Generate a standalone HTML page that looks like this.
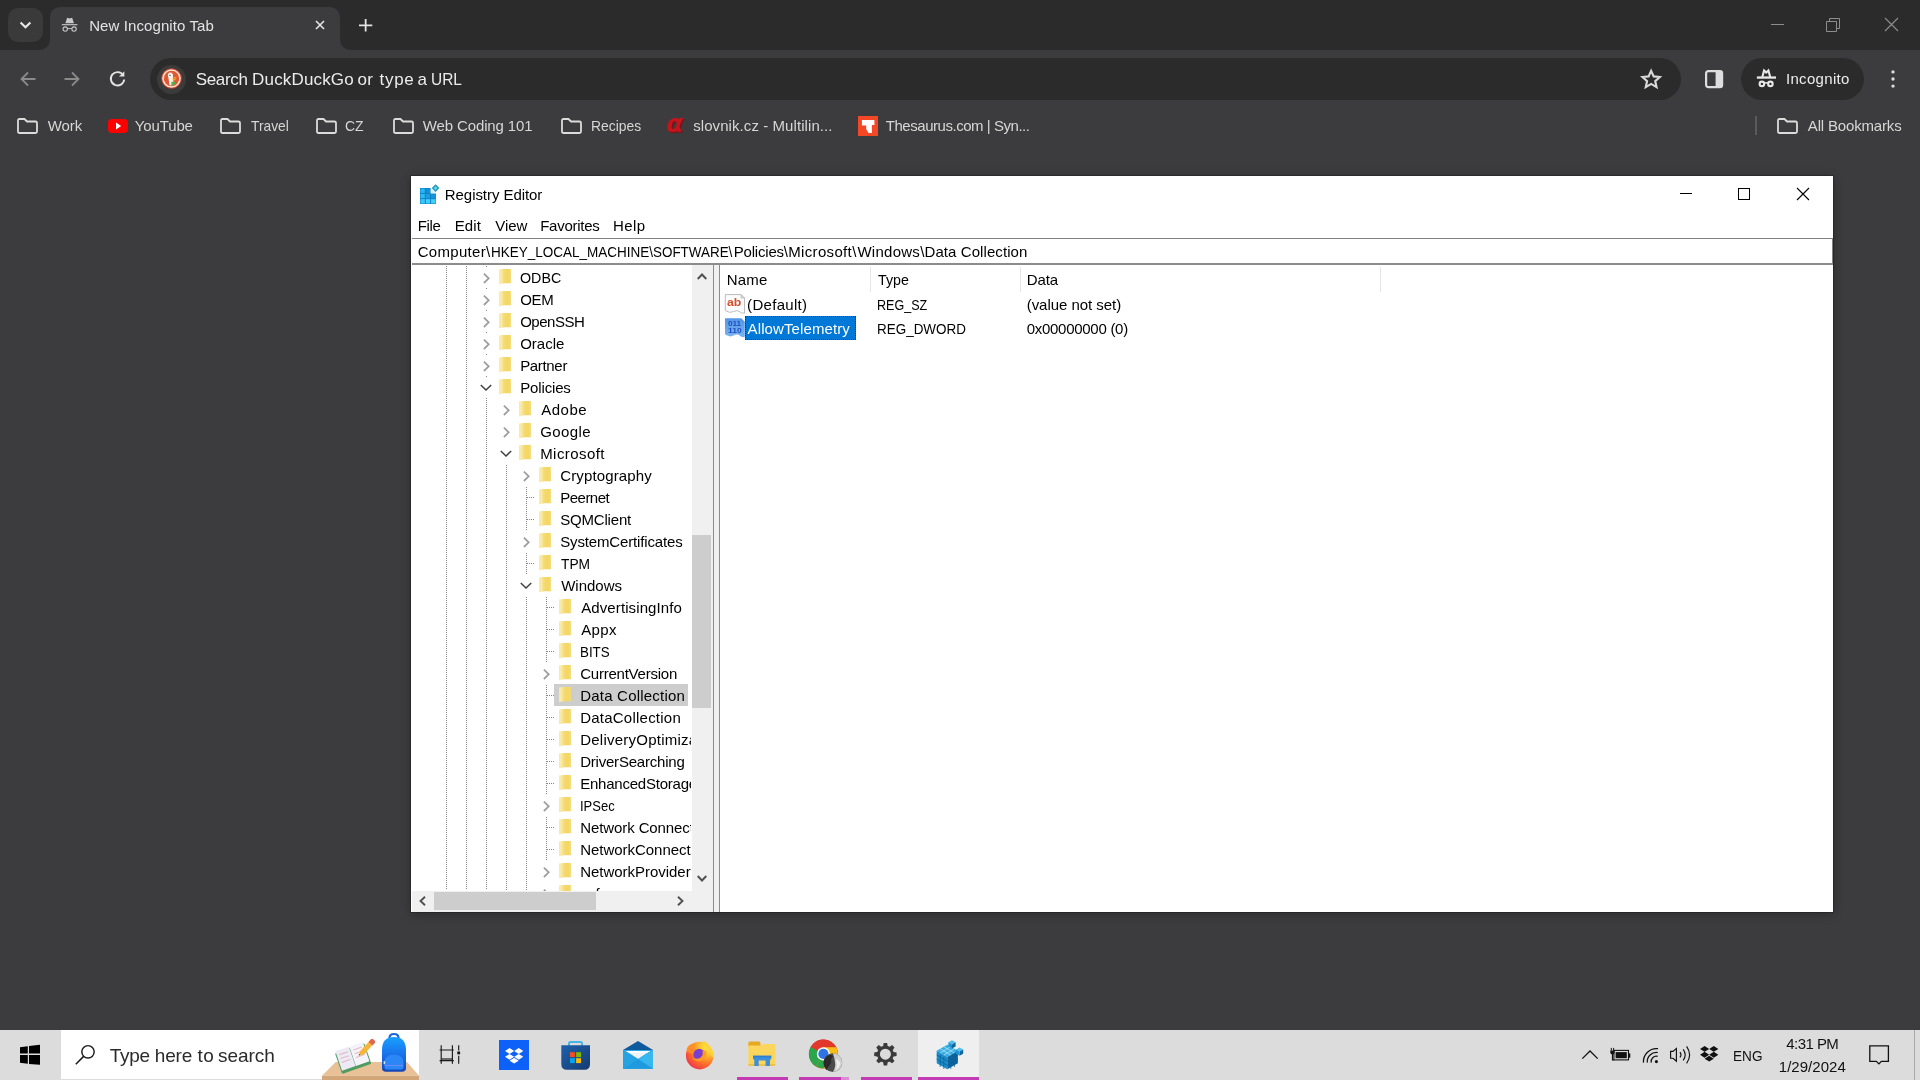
<!DOCTYPE html>
<html><head><meta charset='utf-8'><title>Registry Editor</title><style>
*{box-sizing:border-box;margin:0;padding:0}
html,body{width:1920px;height:1080px;overflow:hidden;background:#3c3b3d;font-family:'Liberation Sans',sans-serif}
.a{position:absolute}
.t{position:absolute;white-space:pre;font-family:'Liberation Sans',sans-serif}
svg{position:absolute;overflow:visible}
</style></head><body>
<div id='root' style='position:absolute;left:0;top:0;width:1920px;height:1080px;will-change:transform'>
<div class="a" style="left:0;top:0;width:1920px;height:50px;background:#2b2b2b"></div>
<div class="a" style="left:8px;top:8px;width:35px;height:34px;border-radius:10px;background:#3a3a3a"></div>
<svg style="left:19px;top:21px" width="13" height="8" viewBox="0 0 13 8"><path d="M1.6 1.4 L6.5 6.2 L11.4 1.4" fill="none" stroke="#e8e8e8" stroke-width="2.1"/></svg>
<svg style="left:38px;top:7px" width="326" height="43" viewBox="0 0 326 43"><path d="M0 43 C8 43 12 39 12 31 V11 C12 4 16 0 23 0 H291 C298 0 302 4 302 11 V31 C302 39 306 43 314 43 Z" fill="#3c3b3d"/></svg>
<div class="a" style="left:0;top:50px;width:1920px;height:102px;background:#3c3b3d;border-radius:8px 8px 0 0"></div>
<svg style="left:61.4px;top:15.75px" width="17.3" height="17.3" viewBox="0 0 20 20"><path d="M5 8.4 L7.1 2.1 L10 3 L12.9 2.1 L15 8.4 Z" fill="#c8c8c8"/><rect x="1" y="9.4" width="18" height="1.3" fill="#c8c8c8"/><circle cx="4.9" cy="15.1" r="2.55" fill="none" stroke="#c8c8c8" stroke-width="1.25"/><circle cx="15.1" cy="15.1" r="2.55" fill="none" stroke="#c8c8c8" stroke-width="1.25"/><path d="M7.6 14.6 H12.4" fill="none" stroke="#c8c8c8" stroke-width="1.1"/></svg>
<span class="t" style="left:89.20px;top:15.95px;font-size:15px;line-height:20px;color:#e3e3e3;letter-spacing:0.094px;">New Incognito Tab</span>
<svg style="left:315px;top:20px" width="10" height="10" viewBox="0 0 10 10"><path d="M1 1 L9 9 M9 1 L1 9" stroke="#e3e3e3" stroke-width="1.7" fill="none"/></svg>
<svg style="left:358.8px;top:18.7px" width="13.3" height="12.6" viewBox="0 0 13.3 12.6"><path d="M6.65 0 V12.6 M0 6.3 H13.3" stroke="#e3e3e3" stroke-width="1.8" fill="none"/></svg>
<div class="a" style="left:1771px;top:24px;width:13px;height:1px;background:#8e8e8e"></div>
<svg style="left:1826px;top:18px" width="14" height="14" viewBox="0 0 14 14"><path d="M0.5 3.5 H10.5 V13.5 H0.5 Z M3.5 3.5 V0.5 H13.5 V10.5 H10.5" stroke="#8e8e8e" stroke-width="1" fill="none"/></svg>
<svg style="left:1885px;top:18px" width="13" height="13" viewBox="0 0 13 13"><path d="M0 0 L13 13 M13 0 L0 13" stroke="#8e8e8e" stroke-width="1.1" fill="none"/></svg>
<svg style="left:20px;top:71px" width="16" height="16" viewBox="0 0 16 16"><path d="M15.5 8 H1.5 M8 1.5 L1.5 8 L8 14.5" stroke="#8a8a8a" stroke-width="1.8" fill="none"/></svg>
<svg style="left:64px;top:71px" width="16" height="16" viewBox="0 0 16 16"><path d="M0.5 8 H14.5 M8 1.5 L14.5 8 L8 14.5" stroke="#8a8a8a" stroke-width="1.8" fill="none"/></svg>
<svg style="left:109.2px;top:70.4px" width="17" height="17" viewBox="0 0 17 17"><path d="M14.2 5.2 A6.7 6.7 0 1 0 15.2 9.5" stroke="#e3e3e3" stroke-width="1.9" fill="none"/><path d="M15.4 1.2 V6.6 H10 Z" fill="#e3e3e3"/></svg>
<div class="a" style="left:150px;top:58px;width:1531px;height:42px;border-radius:21px;background:#2b2b2b"></div>
<div class="a" style="left:157px;top:64.5px;width:29px;height:29px;border-radius:15px;background:#3b3b3b"></div>
<svg style="left:160.6px;top:68.4px" width="21" height="21" viewBox="0 0 21 21"><circle cx="10.5" cy="10.5" r="10.3" fill="#c9452c"/><circle cx="10.5" cy="10.5" r="9.3" fill="#fbe3d3"/><circle cx="10.5" cy="10.5" r="7.7" fill="#de5833"/><path d="M7.6 5.2 C9.8 3.6 12.4 5.4 12 8.6 L12.6 17 L8.6 17.6 L7.4 9.6 C6.7 7.6 6.7 6.2 7.6 5.2 Z" fill="#f7f3ee"/><path d="M11.6 9.2 H15.4 V10.5 H11.6 Z M11.6 11 H14.6 V12.2 H11.6 Z" fill="#f6a623"/><path d="M10.4 13.8 H14 Q14.5 16 12.5 17.4 H10.4 Z" fill="#57b04a"/><circle cx="9" cy="7.4" r="0.7" fill="#444"/></svg>
<span class="t" style="left:195.70px;top:69.26px;font-size:17px;line-height:22px;color:#ececec;letter-spacing:-0.320px;">Search</span>
<span class="t" style="left:252.10px;top:69.26px;font-size:17px;line-height:22px;color:#ececec;letter-spacing:0.156px;">DuckDuckGo</span>
<span class="t" style="left:357.40px;top:69.26px;font-size:17px;line-height:22px;color:#ececec;letter-spacing:0.500px;">or</span>
<span class="t" style="left:379.40px;top:69.26px;font-size:17px;line-height:22px;color:#ececec;letter-spacing:0.767px;">type</span>
<span class="t" style="left:417.40px;top:69.26px;font-size:17px;line-height:22px;color:#ececec;letter-spacing:0.000px;">a</span>
<span class="t" style="left:431.09px;top:69.26px;font-size:17px;line-height:22px;color:#ececec;transform:scaleX(0.9091);transform-origin:0 0;">URL</span>
<svg style="left:1641.2px;top:69.3px" width="20.3" height="19.3" viewBox="0 0 20 19"><path d="M10 1.8 L12.5 7.3 L18.5 7.9 L14 11.9 L15.3 17.8 L10 14.7 L4.7 17.8 L6 11.9 L1.5 7.9 L7.5 7.3 Z" stroke="#d9d9d9" stroke-width="2.1" fill="none" stroke-linejoin="miter"/></svg>
<svg style="left:1705px;top:70px" width="18.2" height="18.2" viewBox="0 0 18.2 18.2"><rect x="1.1" y="1.1" width="16" height="16" rx="2.2" fill="none" stroke="#dedede" stroke-width="2.2"/><rect x="10.6" y="1.1" width="6.5" height="16" fill="#dedede"/></svg>
<div class="a" style="left:1741px;top:58px;width:123px;height:42px;border-radius:21px;background:#2b2b2b"></div>
<svg style="left:1756px;top:68px" width="21" height="20" viewBox="0 0 21 20"><path d="M6.3 9 L8.1 2.5 L10.25 4.5 L12.4 2.5 L14.2 9" fill="none" stroke="#e8e8e8" stroke-width="2.1" stroke-linejoin="miter"/><rect x="0.9" y="8.4" width="19.1" height="2.3" fill="#e8e8e8"/><circle cx="5.9" cy="15.9" r="2.25" fill="none" stroke="#e8e8e8" stroke-width="2.1"/><circle cx="14.4" cy="15.9" r="2.25" fill="none" stroke="#e8e8e8" stroke-width="2.1"/><path d="M8 15.3 Q10.15 14.2 12.3 15.3" fill="none" stroke="#e8e8e8" stroke-width="1.5"/></svg>
<span class="t" style="left:1785.90px;top:69.05px;font-size:15px;line-height:20px;color:#ececec;letter-spacing:0.337px;">Incognito</span>
<svg style="left:1890.6px;top:68.8px" width="4" height="20" viewBox="0 0 4 20"><circle cx="2" cy="2.9" r="1.7" fill="#dcdcdc"/><circle cx="2" cy="10" r="1.7" fill="#dcdcdc"/><circle cx="2" cy="17.1" r="1.7" fill="#dcdcdc"/></svg>
<svg style="left:17px;top:118px" width="21" height="16" viewBox="0 0 21 16"><path d="M1 2.5 Q1 1 2.5 1 H7.5 L10 3.5 H18.5 Q20 3.5 20 5 V13.5 Q20 15 18.5 15 H2.5 Q1 15 1 13.5 Z" fill="none" stroke="#dcdcdc" stroke-width="1.8" stroke-linejoin="round"/></svg>
<span class="t" style="left:47.80px;top:115.95px;font-size:15px;line-height:20px;color:#d6d6d6;letter-spacing:-0.100px;">Work</span>
<svg style="left:108px;top:119px" width="20" height="14" viewBox="0 0 20 14"><rect width="20" height="14" rx="4" fill="#ff0000"/><path d="M8 3.6 L13.2 7 L8 10.4 Z" fill="#fff"/></svg>
<span class="t" style="left:134.80px;top:115.95px;font-size:15px;line-height:20px;color:#d6d6d6;letter-spacing:-0.133px;">YouTube</span>
<svg style="left:220px;top:118px" width="21" height="16" viewBox="0 0 21 16"><path d="M1 2.5 Q1 1 2.5 1 H7.5 L10 3.5 H18.5 Q20 3.5 20 5 V13.5 Q20 15 18.5 15 H2.5 Q1 15 1 13.5 Z" fill="none" stroke="#dcdcdc" stroke-width="1.8" stroke-linejoin="round"/></svg>
<span class="t" style="left:250.90px;top:115.95px;font-size:15px;line-height:20px;color:#d6d6d6;transform:scaleX(0.9200);transform-origin:0 0;">Travel</span>
<svg style="left:316px;top:118px" width="21" height="16" viewBox="0 0 21 16"><path d="M1 2.5 Q1 1 2.5 1 H7.5 L10 3.5 H18.5 Q20 3.5 20 5 V13.5 Q20 15 18.5 15 H2.5 Q1 15 1 13.5 Z" fill="none" stroke="#dcdcdc" stroke-width="1.8" stroke-linejoin="round"/></svg>
<span class="t" style="left:345.27px;top:115.95px;font-size:15px;line-height:20px;color:#d6d6d6;transform:scaleX(0.9316);transform-origin:0 0;">CZ</span>
<svg style="left:392.5px;top:118px" width="21" height="16" viewBox="0 0 21 16"><path d="M1 2.5 Q1 1 2.5 1 H7.5 L10 3.5 H18.5 Q20 3.5 20 5 V13.5 Q20 15 18.5 15 H2.5 Q1 15 1 13.5 Z" fill="none" stroke="#dcdcdc" stroke-width="1.8" stroke-linejoin="round"/></svg>
<span class="t" style="left:422.70px;top:115.95px;font-size:15px;line-height:20px;color:#d6d6d6;letter-spacing:-0.115px;">Web Coding 101</span>
<svg style="left:561px;top:118px" width="21" height="16" viewBox="0 0 21 16"><path d="M1 2.5 Q1 1 2.5 1 H7.5 L10 3.5 H18.5 Q20 3.5 20 5 V13.5 Q20 15 18.5 15 H2.5 Q1 15 1 13.5 Z" fill="none" stroke="#dcdcdc" stroke-width="1.8" stroke-linejoin="round"/></svg>
<span class="t" style="left:590.98px;top:115.95px;font-size:15px;line-height:20px;color:#d6d6d6;transform:scaleX(0.9245);transform-origin:0 0;">Recipes</span>
<span class="t" style="left:666.50px;top:107.96px;font-size:24.5px;line-height:32px;color:#c4151c;letter-spacing:0.000px;font-weight:700;font-family:'DejaVu Sans',sans-serif;font-style:italic;text-shadow:1px 1px 0 #7a1014;">α</span>
<span class="t" style="left:693.20px;top:115.95px;font-size:15px;line-height:20px;color:#d6d6d6;letter-spacing:0.078px;">slovnik.cz - Multilin...</span>
<div class="a" style="left:857.8px;top:116px;width:20.3px;height:19.7px;background:#f44725"></div>
<svg style="left:858px;top:116px" width="20" height="20" viewBox="0 0 20 20"><path d="M3.9 4 H16.4 V9 H13.9 V17 H10.6 L8.2 13.2 V9.6 H3.9 Z" fill="#fff"/></svg>
<span class="t" style="left:885.80px;top:115.95px;font-size:15px;line-height:20px;color:#d6d6d6;letter-spacing:-0.467px;">Thesaurus.com | Syn...</span>
<div class="a" style="left:1755px;top:116px;width:2px;height:19px;background:#5a5a5a"></div>
<svg style="left:1777px;top:118px" width="21" height="16" viewBox="0 0 21 16"><path d="M1 2.5 Q1 1 2.5 1 H7.5 L10 3.5 H18.5 Q20 3.5 20 5 V13.5 Q20 15 18.5 15 H2.5 Q1 15 1 13.5 Z" fill="none" stroke="#dcdcdc" stroke-width="1.8" stroke-linejoin="round"/></svg>
<span class="t" style="left:1807.80px;top:115.95px;font-size:15px;line-height:20px;color:#d6d6d6;letter-spacing:-0.167px;">All Bookmarks</span>
<div class="a" style="left:411px;top:176px;width:1422px;height:736px;background:#fff;box-shadow:0 0 0 1px rgba(0,0,0,.22),0 2px 10px 0 rgba(0,0,0,.30)"></div>
<svg style="left:419px;top:183px" width="22" height="22" viewBox="419 183 22 22"><path d="M420 188.1 H430.6 V193.4 H435.9 V204 H420 Z" fill="#0b7cc6"/><rect x="430.8" y="188.4" width="4.6" height="4.8" fill="#d6f6fd"/><rect x="420.45" y="188.55" width="4.40" height="4.40" fill="#27b6f0"/><rect x="425.75" y="188.55" width="4.40" height="4.40" fill="#1192d8"/><rect x="420.45" y="193.85" width="4.40" height="4.40" fill="#2bbaf3"/><rect x="425.75" y="193.85" width="4.40" height="4.40" fill="#1a9fe2"/><rect x="431.05" y="193.85" width="4.40" height="4.40" fill="#1395d6"/><rect x="420.45" y="199.15" width="4.40" height="4.40" fill="#3cc5f7"/><rect x="425.75" y="199.15" width="4.40" height="4.40" fill="#40d0fb"/><rect x="431.05" y="199.15" width="4.40" height="4.40" fill="#40d0fb"/><path d="M435.6 184.3 L439.4 188.1 L435.6 191.9 L431.8 188.1 Z" fill="#2796b4"/><path d="M435.6 186.2 L437.5 188.1 L435.6 190 L433.7 188.1 Z" fill="#55def6"/></svg>
<span class="t" style="left:444.80px;top:184.75px;font-size:15px;line-height:20px;color:#000;letter-spacing:-0.057px;">Registry Editor</span>
<div class="a" style="left:1680px;top:193px;width:12px;height:1px;background:#000"></div>
<div class="a" style="left:1738px;top:188px;width:12px;height:12px;border:1px solid #000"></div>
<svg style="left:1797px;top:188px" width="12" height="12" viewBox="0 0 12 12"><path d="M0 0 L12 12 M12 0 L0 12" stroke="#000" stroke-width="1.1" fill="none"/></svg>
<span class="t" style="left:417.70px;top:215.75px;font-size:15px;line-height:20px;color:#000;letter-spacing:-0.333px;">File</span>
<span class="t" style="left:454.80px;top:215.75px;font-size:15px;line-height:20px;color:#000;letter-spacing:0.067px;">Edit</span>
<span class="t" style="left:495.20px;top:215.75px;font-size:15px;line-height:20px;color:#000;letter-spacing:0.000px;">View</span>
<span class="t" style="left:540.20px;top:215.75px;font-size:15px;line-height:20px;color:#000;letter-spacing:-0.250px;">Favorites</span>
<span class="t" style="left:612.90px;top:215.75px;font-size:15px;line-height:20px;color:#000;letter-spacing:0.467px;">Help</span>
<div class="a" style="left:412px;top:238px;width:1421px;height:1px;background:#828282"></div>
<div class="a" style="left:1832px;top:238px;width:1px;height:26px;background:#828282"></div>
<span class="t" style="left:417.70px;top:242.25px;font-size:15px;line-height:20px;color:#000;letter-spacing:0.300px;">Computer\</span>
<span class="t" style="left:491.00px;top:242.25px;font-size:15px;line-height:20px;color:#000;transform:scaleX(0.9000);transform-origin:0 0;">HKEY_LOCAL_MACHINE\</span>
<span class="t" style="left:653.30px;top:242.25px;font-size:15px;line-height:20px;color:#000;transform:scaleX(0.8955);transform-origin:0 0;">SOFTWARE\</span>
<span class="t" style="left:733.70px;top:242.25px;font-size:15px;line-height:20px;color:#000;letter-spacing:-0.188px;">Policies\</span>
<span class="t" style="left:788.20px;top:242.25px;font-size:15px;line-height:20px;color:#000;letter-spacing:0.344px;">Microsoft\</span>
<span class="t" style="left:857.40px;top:242.25px;font-size:15px;line-height:20px;color:#000;letter-spacing:0.271px;">Windows\</span>
<span class="t" style="left:924.50px;top:242.25px;font-size:15px;line-height:20px;color:#000;letter-spacing:0.079px;">Data Collection</span>
<div class="a" style="left:412px;top:263px;width:1421px;height:2px;background:#8c8c8c"></div>
<div class="a" style="left:713px;top:265px;width:1px;height:647px;background:#8c8c8c"></div>
<div class="a" style="left:714px;top:265px;width:5px;height:647px;background:#f0f0f0"></div>
<div class="a" style="left:719px;top:265px;width:1px;height:647px;background:#8c8c8c"></div>
<svg width="0" height="0" style="left:0;top:0"><defs><linearGradient id="fg" x1="0" x2="1" y1="0" y2="0"><stop offset="0" stop-color="#f7e08a"/><stop offset="0.5" stop-color="#f3d661"/><stop offset="1" stop-color="#f5db74"/></linearGradient></defs></svg>
<div class="a" style="left:412px;top:265px;width:279px;height:626px;overflow:hidden">
<div class="a" style="left:34px;top:0px;width:1px;height:625px;background:repeating-linear-gradient(to bottom,transparent 0 1px,#868686 1px 2px)"></div>
<div class="a" style="left:54px;top:0px;width:1px;height:625px;background:repeating-linear-gradient(to bottom,transparent 0 1px,#868686 1px 2px)"></div>
<div class="a" style="left:74px;top:0px;width:1px;height:625px;background:repeating-linear-gradient(to bottom,transparent 0 1px,#868686 1px 2px)"></div>
<div class="a" style="left:94px;top:133px;width:1px;height:492px;background:repeating-linear-gradient(to bottom,transparent 0 1px,#868686 1px 2px)"></div>
<div class="a" style="left:114px;top:199px;width:1px;height:426px;background:repeating-linear-gradient(to bottom,transparent 0 1px,#868686 1px 2px)"></div>
<div class="a" style="left:134px;top:331px;width:1px;height:294px;background:repeating-linear-gradient(to bottom,transparent 0 1px,#868686 1px 2px)"></div>
<div class="a" style="left:68px;top:2px;width:13px;height:21px;background:#fff"></div>
<svg style="left:70.80000000000001px;top:8.199999999999989px" width="7" height="11" viewBox="0 0 7 11"><path d="M0.9 0.6 L5.7 5.3 L0.9 10" fill="none" stroke="#9e9e9e" stroke-width="1.75"/></svg>
<svg style="left:86.89999999999998px;top:4.300000000000011px" width="13" height="16" viewBox="0 0 13 16"><path d="M3 0.1 H11.9 V13.6 H12.5 V14.3 H3 Z" fill="url(#fg)"/><path d="M0 0.6 L3.9 0.1 V14.5 L0 15.2 Z" fill="#f9eaa9"/><path d="M3.9 0.1 V14.5" stroke="#f0d77a" stroke-width="0.6"/></svg>
<span class="t" style="left:108.25px;top:2.85px;font-size:15px;line-height:20px;color:#000;transform:scaleX(0.9524);transform-origin:0 0;">ODBC</span>
<div class="a" style="left:68px;top:24px;width:13px;height:21px;background:#fff"></div>
<svg style="left:70.80000000000001px;top:30.19999999999999px" width="7" height="11" viewBox="0 0 7 11"><path d="M0.9 0.6 L5.7 5.3 L0.9 10" fill="none" stroke="#9e9e9e" stroke-width="1.75"/></svg>
<svg style="left:86.89999999999998px;top:26.30000000000001px" width="13" height="16" viewBox="0 0 13 16"><path d="M3 0.1 H11.9 V13.6 H12.5 V14.3 H3 Z" fill="url(#fg)"/><path d="M0 0.6 L3.9 0.1 V14.5 L0 15.2 Z" fill="#f9eaa9"/><path d="M3.9 0.1 V14.5" stroke="#f0d77a" stroke-width="0.6"/></svg>
<span class="t" style="left:108.20px;top:24.85px;font-size:15px;line-height:20px;color:#000;letter-spacing:-0.250px;">OEM</span>
<div class="a" style="left:68px;top:46px;width:13px;height:21px;background:#fff"></div>
<svg style="left:70.80000000000001px;top:52.19999999999999px" width="7" height="11" viewBox="0 0 7 11"><path d="M0.9 0.6 L5.7 5.3 L0.9 10" fill="none" stroke="#9e9e9e" stroke-width="1.75"/></svg>
<svg style="left:86.89999999999998px;top:48.30000000000001px" width="13" height="16" viewBox="0 0 13 16"><path d="M3 0.1 H11.9 V13.6 H12.5 V14.3 H3 Z" fill="url(#fg)"/><path d="M0 0.6 L3.9 0.1 V14.5 L0 15.2 Z" fill="#f9eaa9"/><path d="M3.9 0.1 V14.5" stroke="#f0d77a" stroke-width="0.6"/></svg>
<span class="t" style="left:108.20px;top:46.85px;font-size:15px;line-height:20px;color:#000;letter-spacing:-0.500px;">OpenSSH</span>
<div class="a" style="left:68px;top:68px;width:13px;height:21px;background:#fff"></div>
<svg style="left:70.80000000000001px;top:74.19999999999999px" width="7" height="11" viewBox="0 0 7 11"><path d="M0.9 0.6 L5.7 5.3 L0.9 10" fill="none" stroke="#9e9e9e" stroke-width="1.75"/></svg>
<svg style="left:86.89999999999998px;top:70.30000000000001px" width="13" height="16" viewBox="0 0 13 16"><path d="M3 0.1 H11.9 V13.6 H12.5 V14.3 H3 Z" fill="url(#fg)"/><path d="M0 0.6 L3.9 0.1 V14.5 L0 15.2 Z" fill="#f9eaa9"/><path d="M3.9 0.1 V14.5" stroke="#f0d77a" stroke-width="0.6"/></svg>
<span class="t" style="left:108.20px;top:68.85px;font-size:15px;line-height:20px;color:#000;letter-spacing:0.000px;">Oracle</span>
<div class="a" style="left:68px;top:90px;width:13px;height:21px;background:#fff"></div>
<svg style="left:70.80000000000001px;top:96.19999999999999px" width="7" height="11" viewBox="0 0 7 11"><path d="M0.9 0.6 L5.7 5.3 L0.9 10" fill="none" stroke="#9e9e9e" stroke-width="1.75"/></svg>
<svg style="left:86.89999999999998px;top:92.30000000000001px" width="13" height="16" viewBox="0 0 13 16"><path d="M3 0.1 H11.9 V13.6 H12.5 V14.3 H3 Z" fill="url(#fg)"/><path d="M0 0.6 L3.9 0.1 V14.5 L0 15.2 Z" fill="#f9eaa9"/><path d="M3.9 0.1 V14.5" stroke="#f0d77a" stroke-width="0.6"/></svg>
<span class="t" style="left:108.20px;top:90.85px;font-size:15px;line-height:20px;color:#000;letter-spacing:-0.333px;">Partner</span>
<div class="a" style="left:68px;top:112px;width:13px;height:21px;background:#fff"></div>
<svg style="left:68px;top:119px" width="12" height="7" viewBox="0 0 12 7"><path d="M0.8 1 L6 6 L11.2 1" fill="none" stroke="#404040" stroke-width="1.5"/></svg>
<svg style="left:86.89999999999998px;top:114.30000000000001px" width="13" height="16" viewBox="0 0 13 16"><path d="M3 0.1 H11.9 V13.6 H12.5 V14.3 H3 Z" fill="url(#fg)"/><path d="M0 0.6 L3.9 0.1 V14.5 L0 15.2 Z" fill="#f9eaa9"/><path d="M3.9 0.1 V14.5" stroke="#f0d77a" stroke-width="0.6"/></svg>
<span class="t" style="left:108.20px;top:112.85px;font-size:15px;line-height:20px;color:#000;letter-spacing:-0.143px;">Policies</span>
<div class="a" style="left:88px;top:134px;width:13px;height:21px;background:#fff"></div>
<svg style="left:90.80000000000001px;top:140.2px" width="7" height="11" viewBox="0 0 7 11"><path d="M0.9 0.6 L5.7 5.3 L0.9 10" fill="none" stroke="#9e9e9e" stroke-width="1.75"/></svg>
<svg style="left:106.89999999999998px;top:136.3px" width="13" height="16" viewBox="0 0 13 16"><path d="M3 0.1 H11.9 V13.6 H12.5 V14.3 H3 Z" fill="url(#fg)"/><path d="M0 0.6 L3.9 0.1 V14.5 L0 15.2 Z" fill="#f9eaa9"/><path d="M3.9 0.1 V14.5" stroke="#f0d77a" stroke-width="0.6"/></svg>
<span class="t" style="left:129.20px;top:134.85px;font-size:15px;line-height:20px;color:#000;letter-spacing:0.500px;">Adobe</span>
<div class="a" style="left:88px;top:156px;width:13px;height:21px;background:#fff"></div>
<svg style="left:90.80000000000001px;top:162.2px" width="7" height="11" viewBox="0 0 7 11"><path d="M0.9 0.6 L5.7 5.3 L0.9 10" fill="none" stroke="#9e9e9e" stroke-width="1.75"/></svg>
<svg style="left:106.89999999999998px;top:158.3px" width="13" height="16" viewBox="0 0 13 16"><path d="M3 0.1 H11.9 V13.6 H12.5 V14.3 H3 Z" fill="url(#fg)"/><path d="M0 0.6 L3.9 0.1 V14.5 L0 15.2 Z" fill="#f9eaa9"/><path d="M3.9 0.1 V14.5" stroke="#f0d77a" stroke-width="0.6"/></svg>
<span class="t" style="left:128.20px;top:156.85px;font-size:15px;line-height:20px;color:#000;letter-spacing:0.400px;">Google</span>
<div class="a" style="left:88px;top:178px;width:13px;height:21px;background:#fff"></div>
<svg style="left:88px;top:185px" width="12" height="7" viewBox="0 0 12 7"><path d="M0.8 1 L6 6 L11.2 1" fill="none" stroke="#404040" stroke-width="1.5"/></svg>
<svg style="left:106.89999999999998px;top:180.3px" width="13" height="16" viewBox="0 0 13 16"><path d="M3 0.1 H11.9 V13.6 H12.5 V14.3 H3 Z" fill="url(#fg)"/><path d="M0 0.6 L3.9 0.1 V14.5 L0 15.2 Z" fill="#f9eaa9"/><path d="M3.9 0.1 V14.5" stroke="#f0d77a" stroke-width="0.6"/></svg>
<span class="t" style="left:128.20px;top:178.85px;font-size:15px;line-height:20px;color:#000;letter-spacing:0.438px;">Microsoft</span>
<div class="a" style="left:108px;top:200px;width:13px;height:21px;background:#fff"></div>
<svg style="left:110.79999999999995px;top:206.2px" width="7" height="11" viewBox="0 0 7 11"><path d="M0.9 0.6 L5.7 5.3 L0.9 10" fill="none" stroke="#9e9e9e" stroke-width="1.75"/></svg>
<svg style="left:126.89999999999998px;top:202.3px" width="13" height="16" viewBox="0 0 13 16"><path d="M3 0.1 H11.9 V13.6 H12.5 V14.3 H3 Z" fill="url(#fg)"/><path d="M0 0.6 L3.9 0.1 V14.5 L0 15.2 Z" fill="#f9eaa9"/><path d="M3.9 0.1 V14.5" stroke="#f0d77a" stroke-width="0.6"/></svg>
<span class="t" style="left:148.20px;top:200.85px;font-size:15px;line-height:20px;color:#000;letter-spacing:0.136px;">Cryptography</span>
<div class="a" style="left:115px;top:232px;width:8px;height:1px;background:repeating-linear-gradient(to right,#868686 0 1px,transparent 1px 2px)"></div>
<svg style="left:126.89999999999998px;top:224.3px" width="13" height="16" viewBox="0 0 13 16"><path d="M3 0.1 H11.9 V13.6 H12.5 V14.3 H3 Z" fill="url(#fg)"/><path d="M0 0.6 L3.9 0.1 V14.5 L0 15.2 Z" fill="#f9eaa9"/><path d="M3.9 0.1 V14.5" stroke="#f0d77a" stroke-width="0.6"/></svg>
<span class="t" style="left:148.20px;top:222.85px;font-size:15px;line-height:20px;color:#000;letter-spacing:-0.500px;">Peernet</span>
<div class="a" style="left:115px;top:254px;width:8px;height:1px;background:repeating-linear-gradient(to right,#868686 0 1px,transparent 1px 2px)"></div>
<svg style="left:126.89999999999998px;top:246.3px" width="13" height="16" viewBox="0 0 13 16"><path d="M3 0.1 H11.9 V13.6 H12.5 V14.3 H3 Z" fill="url(#fg)"/><path d="M0 0.6 L3.9 0.1 V14.5 L0 15.2 Z" fill="#f9eaa9"/><path d="M3.9 0.1 V14.5" stroke="#f0d77a" stroke-width="0.6"/></svg>
<span class="t" style="left:148.20px;top:244.85px;font-size:15px;line-height:20px;color:#000;letter-spacing:-0.188px;">SQMClient</span>
<div class="a" style="left:108px;top:266px;width:13px;height:21px;background:#fff"></div>
<svg style="left:110.79999999999995px;top:272.20000000000005px" width="7" height="11" viewBox="0 0 7 11"><path d="M0.9 0.6 L5.7 5.3 L0.9 10" fill="none" stroke="#9e9e9e" stroke-width="1.75"/></svg>
<svg style="left:126.89999999999998px;top:268.29999999999995px" width="13" height="16" viewBox="0 0 13 16"><path d="M3 0.1 H11.9 V13.6 H12.5 V14.3 H3 Z" fill="url(#fg)"/><path d="M0 0.6 L3.9 0.1 V14.5 L0 15.2 Z" fill="#f9eaa9"/><path d="M3.9 0.1 V14.5" stroke="#f0d77a" stroke-width="0.6"/></svg>
<span class="t" style="left:148.20px;top:266.85px;font-size:15px;line-height:20px;color:#000;letter-spacing:-0.147px;">SystemCertificates</span>
<div class="a" style="left:115px;top:298px;width:8px;height:1px;background:repeating-linear-gradient(to right,#868686 0 1px,transparent 1px 2px)"></div>
<svg style="left:126.89999999999998px;top:290.29999999999995px" width="13" height="16" viewBox="0 0 13 16"><path d="M3 0.1 H11.9 V13.6 H12.5 V14.3 H3 Z" fill="url(#fg)"/><path d="M0 0.6 L3.9 0.1 V14.5 L0 15.2 Z" fill="#f9eaa9"/><path d="M3.9 0.1 V14.5" stroke="#f0d77a" stroke-width="0.6"/></svg>
<span class="t" style="left:149.20px;top:288.85px;font-size:15px;line-height:20px;color:#000;transform:scaleX(0.9194);transform-origin:0 0;">TPM</span>
<div class="a" style="left:108px;top:310px;width:13px;height:21px;background:#fff"></div>
<svg style="left:108px;top:317px" width="12" height="7" viewBox="0 0 12 7"><path d="M0.8 1 L6 6 L11.2 1" fill="none" stroke="#404040" stroke-width="1.5"/></svg>
<svg style="left:126.89999999999998px;top:312.29999999999995px" width="13" height="16" viewBox="0 0 13 16"><path d="M3 0.1 H11.9 V13.6 H12.5 V14.3 H3 Z" fill="url(#fg)"/><path d="M0 0.6 L3.9 0.1 V14.5 L0 15.2 Z" fill="#f9eaa9"/><path d="M3.9 0.1 V14.5" stroke="#f0d77a" stroke-width="0.6"/></svg>
<span class="t" style="left:149.20px;top:310.85px;font-size:15px;line-height:20px;color:#000;letter-spacing:0.000px;">Windows</span>
<div class="a" style="left:135px;top:342px;width:8px;height:1px;background:repeating-linear-gradient(to right,#868686 0 1px,transparent 1px 2px)"></div>
<svg style="left:146.89999999999998px;top:334.29999999999995px" width="13" height="16" viewBox="0 0 13 16"><path d="M3 0.1 H11.9 V13.6 H12.5 V14.3 H3 Z" fill="url(#fg)"/><path d="M0 0.6 L3.9 0.1 V14.5 L0 15.2 Z" fill="#f9eaa9"/><path d="M3.9 0.1 V14.5" stroke="#f0d77a" stroke-width="0.6"/></svg>
<span class="t" style="left:169.20px;top:332.85px;font-size:15px;line-height:20px;color:#000;letter-spacing:0.107px;">AdvertisingInfo</span>
<div class="a" style="left:135px;top:364px;width:8px;height:1px;background:repeating-linear-gradient(to right,#868686 0 1px,transparent 1px 2px)"></div>
<svg style="left:146.89999999999998px;top:356.29999999999995px" width="13" height="16" viewBox="0 0 13 16"><path d="M3 0.1 H11.9 V13.6 H12.5 V14.3 H3 Z" fill="url(#fg)"/><path d="M0 0.6 L3.9 0.1 V14.5 L0 15.2 Z" fill="#f9eaa9"/><path d="M3.9 0.1 V14.5" stroke="#f0d77a" stroke-width="0.6"/></svg>
<span class="t" style="left:169.20px;top:354.85px;font-size:15px;line-height:20px;color:#000;letter-spacing:0.333px;">Appx</span>
<div class="a" style="left:135px;top:386px;width:8px;height:1px;background:repeating-linear-gradient(to right,#868686 0 1px,transparent 1px 2px)"></div>
<svg style="left:146.89999999999998px;top:378.29999999999995px" width="13" height="16" viewBox="0 0 13 16"><path d="M3 0.1 H11.9 V13.6 H12.5 V14.3 H3 Z" fill="url(#fg)"/><path d="M0 0.6 L3.9 0.1 V14.5 L0 15.2 Z" fill="#f9eaa9"/><path d="M3.9 0.1 V14.5" stroke="#f0d77a" stroke-width="0.6"/></svg>
<span class="t" style="left:168.31px;top:376.85px;font-size:15px;line-height:20px;color:#000;transform:scaleX(0.8906);transform-origin:0 0;">BITS</span>
<div class="a" style="left:128px;top:398px;width:13px;height:21px;background:#fff"></div>
<svg style="left:130.79999999999995px;top:404.20000000000005px" width="7" height="11" viewBox="0 0 7 11"><path d="M0.9 0.6 L5.7 5.3 L0.9 10" fill="none" stroke="#9e9e9e" stroke-width="1.75"/></svg>
<svg style="left:146.89999999999998px;top:400.29999999999995px" width="13" height="16" viewBox="0 0 13 16"><path d="M3 0.1 H11.9 V13.6 H12.5 V14.3 H3 Z" fill="url(#fg)"/><path d="M0 0.6 L3.9 0.1 V14.5 L0 15.2 Z" fill="#f9eaa9"/><path d="M3.9 0.1 V14.5" stroke="#f0d77a" stroke-width="0.6"/></svg>
<span class="t" style="left:168.20px;top:398.85px;font-size:15px;line-height:20px;color:#000;letter-spacing:-0.231px;">CurrentVersion</span>
<div class="a" style="left:135px;top:430px;width:8px;height:1px;background:repeating-linear-gradient(to right,#868686 0 1px,transparent 1px 2px)"></div>
<div class="a" style="left:142px;top:419px;width:134px;height:22px;background:#cdcdcd"></div>
<svg style="left:146.89999999999998px;top:422.29999999999995px" width="13" height="16" viewBox="0 0 13 16"><path d="M3 0.1 H11.9 V13.6 H12.5 V14.3 H3 Z" fill="url(#fg)"/><path d="M0 0.6 L3.9 0.1 V14.5 L0 15.2 Z" fill="#f9eaa9"/><path d="M3.9 0.1 V14.5" stroke="#f0d77a" stroke-width="0.6"/></svg>
<span class="t" style="left:168.20px;top:420.85px;font-size:15px;line-height:20px;color:#000;letter-spacing:0.214px;">Data Collection</span>
<div class="a" style="left:135px;top:452px;width:8px;height:1px;background:repeating-linear-gradient(to right,#868686 0 1px,transparent 1px 2px)"></div>
<svg style="left:146.89999999999998px;top:444.29999999999995px" width="13" height="16" viewBox="0 0 13 16"><path d="M3 0.1 H11.9 V13.6 H12.5 V14.3 H3 Z" fill="url(#fg)"/><path d="M0 0.6 L3.9 0.1 V14.5 L0 15.2 Z" fill="#f9eaa9"/><path d="M3.9 0.1 V14.5" stroke="#f0d77a" stroke-width="0.6"/></svg>
<span class="t" style="left:168.20px;top:442.85px;font-size:15px;line-height:20px;color:#000;letter-spacing:0.231px;">DataCollection</span>
<div class="a" style="left:135px;top:474px;width:8px;height:1px;background:repeating-linear-gradient(to right,#868686 0 1px,transparent 1px 2px)"></div>
<svg style="left:146.89999999999998px;top:466.29999999999995px" width="13" height="16" viewBox="0 0 13 16"><path d="M3 0.1 H11.9 V13.6 H12.5 V14.3 H3 Z" fill="url(#fg)"/><path d="M0 0.6 L3.9 0.1 V14.5 L0 15.2 Z" fill="#f9eaa9"/><path d="M3.9 0.1 V14.5" stroke="#f0d77a" stroke-width="0.6"/></svg>
<span class="t" style="left:168.20px;top:464.85px;font-size:15px;line-height:20px;color:#000;letter-spacing:0.243px;">DeliveryOptimization</span>
<div class="a" style="left:135px;top:496px;width:8px;height:1px;background:repeating-linear-gradient(to right,#868686 0 1px,transparent 1px 2px)"></div>
<svg style="left:146.89999999999998px;top:488.29999999999995px" width="13" height="16" viewBox="0 0 13 16"><path d="M3 0.1 H11.9 V13.6 H12.5 V14.3 H3 Z" fill="url(#fg)"/><path d="M0 0.6 L3.9 0.1 V14.5 L0 15.2 Z" fill="#f9eaa9"/><path d="M3.9 0.1 V14.5" stroke="#f0d77a" stroke-width="0.6"/></svg>
<span class="t" style="left:168.20px;top:486.85px;font-size:15px;line-height:20px;color:#000;letter-spacing:-0.214px;">DriverSearching</span>
<div class="a" style="left:135px;top:518px;width:8px;height:1px;background:repeating-linear-gradient(to right,#868686 0 1px,transparent 1px 2px)"></div>
<svg style="left:146.89999999999998px;top:510.29999999999995px" width="13" height="16" viewBox="0 0 13 16"><path d="M3 0.1 H11.9 V13.6 H12.5 V14.3 H3 Z" fill="url(#fg)"/><path d="M0 0.6 L3.9 0.1 V14.5 L0 15.2 Z" fill="#f9eaa9"/><path d="M3.9 0.1 V14.5" stroke="#f0d77a" stroke-width="0.6"/></svg>
<span class="t" style="left:168.20px;top:508.85px;font-size:15px;line-height:20px;color:#000;letter-spacing:-0.223px;">EnhancedStorageDevices</span>
<div class="a" style="left:128px;top:530px;width:13px;height:21px;background:#fff"></div>
<svg style="left:130.79999999999995px;top:536.2px" width="7" height="11" viewBox="0 0 7 11"><path d="M0.9 0.6 L5.7 5.3 L0.9 10" fill="none" stroke="#9e9e9e" stroke-width="1.75"/></svg>
<svg style="left:146.89999999999998px;top:532.3px" width="13" height="16" viewBox="0 0 13 16"><path d="M3 0.1 H11.9 V13.6 H12.5 V14.3 H3 Z" fill="url(#fg)"/><path d="M0 0.6 L3.9 0.1 V14.5 L0 15.2 Z" fill="#f9eaa9"/><path d="M3.9 0.1 V14.5" stroke="#f0d77a" stroke-width="0.6"/></svg>
<span class="t" style="left:168.33px;top:530.85px;font-size:15px;line-height:20px;color:#000;transform:scaleX(0.8667);transform-origin:0 0;">IPSec</span>
<div class="a" style="left:135px;top:562px;width:8px;height:1px;background:repeating-linear-gradient(to right,#868686 0 1px,transparent 1px 2px)"></div>
<svg style="left:146.89999999999998px;top:554.3px" width="13" height="16" viewBox="0 0 13 16"><path d="M3 0.1 H11.9 V13.6 H12.5 V14.3 H3 Z" fill="url(#fg)"/><path d="M0 0.6 L3.9 0.1 V14.5 L0 15.2 Z" fill="#f9eaa9"/><path d="M3.9 0.1 V14.5" stroke="#f0d77a" stroke-width="0.6"/></svg>
<span class="t" style="left:168.20px;top:552.85px;font-size:15px;line-height:20px;color:#000;letter-spacing:-0.092px;">Network Connections</span>
<div class="a" style="left:135px;top:584px;width:8px;height:1px;background:repeating-linear-gradient(to right,#868686 0 1px,transparent 1px 2px)"></div>
<svg style="left:146.89999999999998px;top:576.3px" width="13" height="16" viewBox="0 0 13 16"><path d="M3 0.1 H11.9 V13.6 H12.5 V14.3 H3 Z" fill="url(#fg)"/><path d="M0 0.6 L3.9 0.1 V14.5 L0 15.2 Z" fill="#f9eaa9"/><path d="M3.9 0.1 V14.5" stroke="#f0d77a" stroke-width="0.6"/></svg>
<span class="t" style="left:168.20px;top:574.85px;font-size:15px;line-height:20px;color:#000;letter-spacing:-0.031px;">NetworkConnectivityStatusIndicator</span>
<div class="a" style="left:128px;top:596px;width:13px;height:21px;background:#fff"></div>
<svg style="left:130.79999999999995px;top:602.2px" width="7" height="11" viewBox="0 0 7 11"><path d="M0.9 0.6 L5.7 5.3 L0.9 10" fill="none" stroke="#9e9e9e" stroke-width="1.75"/></svg>
<svg style="left:146.89999999999998px;top:598.3px" width="13" height="16" viewBox="0 0 13 16"><path d="M3 0.1 H11.9 V13.6 H12.5 V14.3 H3 Z" fill="url(#fg)"/><path d="M0 0.6 L3.9 0.1 V14.5 L0 15.2 Z" fill="#f9eaa9"/><path d="M3.9 0.1 V14.5" stroke="#f0d77a" stroke-width="0.6"/></svg>
<span class="t" style="left:168.20px;top:596.85px;font-size:15px;line-height:20px;color:#000;letter-spacing:-0.029px;">NetworkProvider</span>
<div class="a" style="left:128px;top:618px;width:13px;height:21px;background:#fff"></div>
<svg style="left:130.79999999999995px;top:624.2px" width="7" height="11" viewBox="0 0 7 11"><path d="M0.9 0.6 L5.7 5.3 L0.9 10" fill="none" stroke="#9e9e9e" stroke-width="1.75"/></svg>
<svg style="left:146.89999999999998px;top:620.3px" width="13" height="16" viewBox="0 0 13 16"><path d="M3 0.1 H11.9 V13.6 H12.5 V14.3 H3 Z" fill="url(#fg)"/><path d="M0 0.6 L3.9 0.1 V14.5 L0 15.2 Z" fill="#f9eaa9"/><path d="M3.9 0.1 V14.5" stroke="#f0d77a" stroke-width="0.6"/></svg>
<span class="t" style="left:168.20px;top:618.85px;font-size:15px;line-height:20px;color:#000;letter-spacing:-0.250px;">safer</span>
</div>
<div class="a" style="left:692px;top:265px;width:21px;height:626px;background:#f0f0f0"></div>
<div class="a" style="left:692px;top:535px;width:19px;height:173px;background:#cdcdcd"></div>
<svg style="left:697px;top:273px" width="10" height="7" viewBox="0 0 10 7"><path d="M0.7 6 L5 1.5 L9.3 6" fill="none" stroke="#505050" stroke-width="1.9"/></svg>
<svg style="left:697px;top:875px" width="10" height="7" viewBox="0 0 10 7"><path d="M0.7 1 L5 5.5 L9.3 1" fill="none" stroke="#505050" stroke-width="1.9"/></svg>
<div class="a" style="left:412px;top:891px;width:301px;height:21px;background:#f0f0f0"></div>
<div class="a" style="left:434px;top:892px;width:162px;height:18px;background:#cdcdcd"></div>
<svg style="left:419px;top:895.5px" width="7" height="10" viewBox="0 0 7 10"><path d="M6 0.7 L1.5 5 L6 9.3" fill="none" stroke="#505050" stroke-width="1.9"/></svg>
<svg style="left:677px;top:895.5px" width="7" height="10" viewBox="0 0 7 10"><path d="M1 0.7 L5.5 5 L1 9.3" fill="none" stroke="#505050" stroke-width="1.9"/></svg>
<div class="a" style="left:870px;top:267px;width:1px;height:25px;background:#e5e5e5"></div>
<div class="a" style="left:1020px;top:267px;width:1px;height:25px;background:#e5e5e5"></div>
<div class="a" style="left:1380px;top:267px;width:1px;height:25px;background:#e5e5e5"></div>
<span class="t" style="left:726.70px;top:269.95px;font-size:15px;line-height:20px;color:#000;letter-spacing:0.200px;">Name</span>
<span class="t" style="left:877.70px;top:269.95px;font-size:15px;line-height:20px;color:#000;transform:scaleX(0.9469);transform-origin:0 0;">Type</span>
<span class="t" style="left:1026.70px;top:269.95px;font-size:15px;line-height:20px;color:#000;letter-spacing:-0.100px;">Data</span>
<svg style="left:724px;top:293px" width="22" height="22" viewBox="724 293 22 22"><path d="M725.3 294.6 H741 L744.5 298.1 V313.2 Q741.5 313.6 739.5 311.6 Q737 309.6 733.5 311.6 Q730 313.6 725.3 310.6 Z" fill="#fdfdfd" stroke="#b4b4b4" stroke-width="0.9"/><path d="M741 294.6 V298.1 H744.5 Z" fill="#dcdcdc" stroke="#b4b4b4" stroke-width="0.7"/><text x="727" y="306.1" font-family="Liberation Sans,sans-serif" font-weight="700" font-size="11.6" fill="#d4502e" textLength="14.3" lengthAdjust="spacingAndGlyphs">ab</text></svg>
<span class="t" style="left:747.10px;top:295.05px;font-size:15px;line-height:20px;color:#000;letter-spacing:0.300px;">(Default)</span>
<span class="t" style="left:876.86px;top:295.05px;font-size:15px;line-height:20px;color:#000;transform:scaleX(0.8356);transform-origin:0 0;">REG_SZ</span>
<span class="t" style="left:1026.70px;top:295.05px;font-size:15px;line-height:20px;color:#000;letter-spacing:-0.043px;">(value not set)</span>
<div class="a" style="left:745px;top:316px;width:111px;height:24px;background:#0078d7;outline:1px dotted #0a3a6a;outline-offset:-1px"></div>
<svg style="left:724px;top:317px" width="22" height="22" viewBox="724 317 22 22"><defs><linearGradient id="dwg" x1="0" y1="0" x2="0" y2="1"><stop offset="0" stop-color="#5496e6"/><stop offset="1" stop-color="#7db4ee"/></linearGradient></defs><path d="M725 318.3 H741.3 L744.8 321.8 V337 Q741.6 337.6 739.6 335.6 Q737 333.6 733.6 335.6 Q730 337.6 725 334.6 Z" fill="url(#dwg)"/><text x="727.9" y="325.9" font-family="Liberation Sans,sans-serif" font-weight="700" font-size="6.5" fill="#1a4fc4" textLength="13.3" lengthAdjust="spacingAndGlyphs">011</text><text x="727.9" y="332.6" font-family="Liberation Sans,sans-serif" font-weight="700" font-size="6.5" fill="#1a4fc4" textLength="13.8" lengthAdjust="spacingAndGlyphs">110</text></svg>
<span class="t" style="left:747.60px;top:319.15px;font-size:15px;line-height:20px;color:#fff;letter-spacing:0.108px;">AllowTelemetry</span>
<span class="t" style="left:876.80px;top:319.15px;font-size:15px;line-height:20px;color:#000;transform:scaleX(0.8969);transform-origin:0 0;">REG_DWORD</span>
<span class="t" style="left:1026.70px;top:319.15px;font-size:15px;line-height:20px;color:#000;letter-spacing:-0.277px;">0x00000000 (0)</span>
<div class="a" style="left:0;top:1030px;width:1920px;height:50px;background:#dddcdd"></div>
<svg style="left:20px;top:1045px" width="20" height="20" viewBox="0 0 20 20"><path d="M0 2.3 L7.8 1.3 V8.6 H0 Z M9 1.1 L20 -0.2 V8.6 H9 Z M0 9.9 H7.8 V18.7 L0 17.7 Z M9 9.9 H20 V19.8 L9 18.9 Z" fill="#000"/></svg>
<div class="a" style="left:61px;top:1030px;width:358px;height:49px;background:#fff"></div>
<svg style="left:75px;top:1044px" width="21" height="21" viewBox="0 0 21 21"><circle cx="13" cy="7.8" r="6.2" fill="none" stroke="#1a1a1a" stroke-width="1.45"/><path d="M8.6 12.4 L0.8 20.2" stroke="#1a1a1a" stroke-width="1.5"/></svg>
<span class="t" style="left:109.70px;top:1043.17px;font-size:19px;line-height:25px;color:#2b2b2b;letter-spacing:-0.300px;">Type</span>
<span class="t" style="left:154.70px;top:1043.17px;font-size:19px;line-height:25px;color:#2b2b2b;letter-spacing:-0.100px;">here</span>
<span class="t" style="left:197.60px;top:1043.17px;font-size:19px;line-height:25px;color:#2b2b2b;letter-spacing:0.300px;">to</span>
<span class="t" style="left:217.95px;top:1043.17px;font-size:19px;line-height:25px;color:#2b2b2b;letter-spacing:-0.010px;">search</span>
<svg style="left:320px;top:1030px" width="100" height="50" viewBox="320 1030 100 50"><defs><linearGradient id="bpk" x1="0" y1="0" x2="0" y2="1"><stop offset="0" stop-color="#18a0ff"/><stop offset="0.5" stop-color="#1a72ea"/><stop offset="1" stop-color="#1546b8"/></linearGradient></defs><path d="M335.7 1062 L407 1062 L419 1075.8 L322 1075.8 Z" fill="#e9c197"/><path d="M322 1075.8 H419 V1080 H322 Z" fill="#d2a678"/><g transform="rotate(-19 353 1058)"><rect x="337.5" y="1047.5" width="31" height="22" rx="1.5" fill="#4f9c62"/><rect x="338.5" y="1046" width="14.3" height="20.5" fill="#ecebf5"/><rect x="353.2" y="1046" width="14.3" height="20.5" fill="#f4f3fa"/><path d="M341 1050.5 H350 M341 1054.5 H350 M341 1058.5 H350 M356 1050.5 H365 M356 1054.5 H365 M356 1058.5 H365" stroke="#e7b9c6" stroke-width="1.1"/></g><path d="M358.6 1055.6 L360.3 1051 L370.3 1040 L374 1043.4 L364 1054.4 Z" fill="#f5b63a"/><path d="M368.6 1041.9 L370.9 1039.3 Q372 1038.2 373.2 1039.3 L374.8 1040.8 Q375.9 1041.9 374.8 1043.1 L372.5 1045.6 Z" fill="#e2664e"/><path d="M358.6 1055.6 L359.2 1053.9 L360.5 1055 Z" fill="#5a4632"/><path d="M389.5 1038 Q389.5 1034 394 1034 Q398.5 1034 398.5 1038" fill="none" stroke="#1f66d8" stroke-width="2.2"/><path d="M382 1050 Q382 1037 394 1037 Q406 1037 406 1050 V1068 Q406 1071.8 402 1071.8 H386 Q382 1071.8 382 1068 Z" fill="url(#bpk)"/><path d="M384.5 1062 Q385 1054.5 394 1054.5 Q403 1054.5 403.5 1062 V1067 Q403.5 1069.5 401 1069.5 H387 Q384.5 1069.5 384.5 1067 Z" fill="#2b86f6"/><path d="M385 1065.5 H403" stroke="#6a8cf5" stroke-width="1.2"/><rect x="383.6" y="1061" width="1.6" height="3.4" rx="0.8" fill="#cfe2ff"/></svg>
<svg style="left:438px;top:1044px" width="24" height="22" viewBox="438 1044 24 22"><g fill="none" stroke="#1a1a1a" stroke-width="1.15"><path d="M439.6 1050 H453.8 M439.6 1060.6 H453.8"/><path d="M441.2 1045.3 V1063.8 M452.4 1045.3 V1063.8"/><path d="M441.2 1059 H452.4"/><path d="M458.7 1045.3 V1050.6 M458.7 1055.8 V1063.8"/></g><rect x="457.3" y="1051.5" width="2.8" height="2.8" fill="#111"/></svg>
<div class="a" style="left:499px;top:1040px;width:30px;height:30px;background:#0d60f8"></div>
<svg style="left:504.8px;top:1047.5px" width="18.3" height="15.6" viewBox="0 0 20 17"><path d="M5 0 L10 3.2 L5 6.4 L0 3.2 Z M15 0 L20 3.2 L15 6.4 L10 3.2 Z M5 6.4 L10 9.6 L5 12.8 L0 9.6 Z M15 6.4 L20 9.6 L15 12.8 L10 9.6 Z M10 10.6 L15 13.8 L10 17 L5 13.8 Z" fill="#fff"/></svg>
<svg style="left:560px;top:1040px" width="31" height="31" viewBox="560 1040 31 31"><defs><linearGradient id="stg" x1="0" y1="0" x2="1" y2="1"><stop offset="0" stop-color="#1e62ad"/><stop offset="1" stop-color="#173a6e"/></linearGradient></defs><path d="M569 1046 V1043.5 Q569 1042 570.5 1042 H580.5 Q582 1042 582 1043.5 V1046" fill="none" stroke="#46b4e6" stroke-width="2"/><path d="M561.3 1045.3 H590 V1064 Q590 1069.8 584.5 1069.8 H566.8 Q561.3 1069.8 561.3 1064 Z" fill="url(#stg)"/><rect x="570" y="1052.2" width="4.9" height="4.9" fill="#f25022"/><rect x="576.1" y="1052.2" width="4.9" height="4.9" fill="#7fba00"/><rect x="570" y="1058.2" width="4.9" height="4.9" fill="#00a4ef"/><rect x="576.1" y="1058.2" width="4.9" height="4.9" fill="#ffb900"/></svg>
<svg style="left:622px;top:1040px" width="32" height="30" viewBox="622 1040 32 30"><path d="M623 1050 L638 1041 L653 1050 V1052 H623 Z" fill="#0f5a9e"/><path d="M623 1050 H653 V1068.8 H623 Z" fill="#2aa9e6"/><path d="M626 1051 H650 L638 1059 Z" fill="#f1f4f7"/><path d="M626 1051 H650 L647 1053 H629 Z" fill="#fff"/><path d="M653 1050 V1068.8 H623 L638 1059 Z" fill="#38b6ee"/><path d="M638 1059 L653 1068.8 H623 Z" fill="#1f9ade"/><path d="M638 1059 L653 1050 V1068.8 Z" fill="#2aaeea" opacity="0.0"/><path d="M623 1050 L638 1059 L623 1068.8 Z" fill="#27a2e2"/></svg>
<svg style="left:684px;top:1039px" width="32" height="32" viewBox="684 1039 32 32"><defs><radialGradient id="ffg" cx="0.78" cy="0.18" r="1.0"><stop offset="0" stop-color="#fff04a"/><stop offset="0.35" stop-color="#ffb52a"/><stop offset="0.65" stop-color="#ff6a2a"/><stop offset="1" stop-color="#e8285a"/></radialGradient></defs><circle cx="699.7" cy="1055.6" r="13.8" fill="url(#ffg)"/><path d="M703 1040.5 Q709 1043 711.5 1049 Q714.5 1052 713.6 1058 L707 1051 Q704 1046 703 1040.5 Z" fill="#ffd43a"/><path d="M686.5 1049 Q689 1044 693.5 1043.5 Q691.5 1046.5 692.5 1049 Z" fill="#ff9a2a"/><circle cx="699.2" cy="1054.6" r="5.8" fill="#7a3fd0"/><path d="M692.5 1052.5 Q696 1047.5 702.5 1049.5 Q698.5 1050.5 698.5 1053.5 Q700.5 1056.5 704.5 1055 Q702.5 1060.5 697 1059.5 Q692 1057.5 692.5 1052.5 Z" fill="#ff8a1a" opacity="0.0"/><path d="M693.3 1053 Q697 1049.8 702 1051 Q699 1052.6 699.3 1054.6 Q701 1056.6 704.6 1056 Q702 1060.6 697.3 1060 Q693 1058.6 693.3 1053 Z" fill="#ff7f22" opacity="0.0"/><path d="M706 1050.5 Q708 1058 701 1061 Q695.5 1062.3 692 1057.5 Q697 1060.3 701 1057.2 Q703.6 1054.6 702.4 1051 Z" fill="#ff9a26"/><path d="M686.3 1052 Q687 1046 692 1044 Q690.5 1047 692.2 1049.5 Q695 1048.5 697 1049 Q693 1051 692.6 1055 Q690 1052 686.3 1052 Z" fill="#ff8a2a"/></svg>
<svg style="left:747px;top:1040px" width="30" height="28" viewBox="747 1040 30 28"><path d="M748.3 1043 Q748.3 1041.5 749.8 1041.5 H759 Q760.5 1041.5 760.5 1043 V1047 H748.3 Z" fill="#e5a820"/><path d="M748.3 1045.5 H761 L763 1044 H774 Q775.4 1044 775.4 1045.4 V1064.5 Q775.4 1065.9 774 1065.9 H749.7 Q748.3 1065.9 748.3 1064.5 Z" fill="#fbd55c"/><path d="M748.3 1064 H775.4 V1064.5 Q775.4 1065.9 774 1065.9 H749.7 Q748.3 1065.9 748.3 1064.5 Z" fill="#eec24a"/><path d="M753 1055.7 H771.3 V1058.8 L770 1060 V1065.9 H765.6 V1060.6 H758.7 V1065.9 H754.3 V1060 L753 1058.8 Z" fill="#3c8fdc"/><path d="M753 1055.7 H771.3 V1057.4 H753 Z" fill="#2f7fcf"/></svg>
<svg style="left:808px;top:1038px" width="36" height="36" viewBox="808 1038 36 36"><circle cx="823.4" cy="1053.90" r="14.5" fill="#e2382c"/><path d="M823.4 1053.90 L810.84 1046.65 A14.5 14.5 0 0 0 816.15 1066.46 Z" fill="#2ca54c"/><path d="M823.4 1053.90 L816.15 1066.46 A14.5 14.5 0 0 0 837.9 1053.90 Z" fill="#f9be15"/><path d="M823.4 1053.90 L837.9 1053.90 A14.5 14.5 0 0 0 810.84 1046.65 Z" fill="#e2382c"/><path d="M823.4 1053.90 L829.7 1057.50 L823.6 1068.30 A14.5 14.5 0 0 1 816.15 1066.46 Z" fill="#2ca54c"/><path d="M823.4 1047.3 H836.3 A14.5 14.5 0 0 1 837.9 1053.9 L823.4 1053.9 Z" fill="#f9be15"/><circle cx="823.4" cy="1053.90" r="6.6" fill="#fff"/><circle cx="823.4" cy="1053.90" r="5.1" fill="#2f74e6"/><circle cx="832.8" cy="1062.70" r="9.4" fill="#4b4b4b"/><path d="M832.8 1053.30 A9.4 9.4 0 0 1 832.8 1072.10 Q836 1066.90 835 1061.90 Q834.5 1056.90 832.8 1053.30 Z" fill="#cfcfcf"/><path d="M826 1056.90 Q830 1053.90 833 1055.90 Q830.5 1058.90 831 1062.90 Q828 1066.90 826.5 1069.90 Q823.6 1066.90 823.6 1062.70 Q823.8 1059.50 826 1056.90 Z" fill="#2a2a2a"/><path d="M836 1058.90 Q839.5 1059.90 840.5 1063.90 Q839 1067.90 836 1069.90 Q837.5 1064.40 836 1058.90 Z" fill="#ececec"/></svg>
<svg style="left:871px;top:1040px" width="29" height="29" viewBox="871 1040 29 29"><g transform="translate(885.4 1054.2)"><g fill="#3b3b3b"><path d="M-1.7 -11.2 H1.7 L2.5 -7 H-2.5 Z" transform="rotate(0)"/><path d="M-1.7 -11.2 H1.7 L2.5 -7 H-2.5 Z" transform="rotate(45)"/><path d="M-1.7 -11.2 H1.7 L2.5 -7 H-2.5 Z" transform="rotate(90)"/><path d="M-1.7 -11.2 H1.7 L2.5 -7 H-2.5 Z" transform="rotate(135)"/><path d="M-1.7 -11.2 H1.7 L2.5 -7 H-2.5 Z" transform="rotate(180)"/><path d="M-1.7 -11.2 H1.7 L2.5 -7 H-2.5 Z" transform="rotate(225)"/><path d="M-1.7 -11.2 H1.7 L2.5 -7 H-2.5 Z" transform="rotate(270)"/><path d="M-1.7 -11.2 H1.7 L2.5 -7 H-2.5 Z" transform="rotate(315)"/></g><circle r="6.95" fill="none" stroke="#3b3b3b" stroke-width="2.9"/></g></svg>
<div class="a" style="left:918px;top:1030px;width:61px;height:50px;background:#f0eff0"></div>
<svg style="left:935px;top:1038px" width="30" height="31" viewBox="935 1038 30 31"><path d="M947.3 1044.70 L957.9 1050.85 L947.3 1057.00 L936.6999999999999 1050.85 Z" fill="#3aaee2"/><path d="M936.6999999999999 1050.85 L947.3 1057.00 L947.3 1069.30 L936.6999999999999 1063.15 Z" fill="#1b8ccb"/><path d="M957.9 1050.85 L947.3 1057.00 L947.3 1069.30 L957.9 1063.15 Z" fill="#0c649f"/><g stroke="#0b5f94" stroke-width="0.9" fill="none" opacity="0.8"><path d="M940.2 1055 V1067 M943.8 1057 V1069 M950.8 1057 V1069 M954.4 1055 V1067"/><path d="M936.7 1055 L947.3 1061.2 L957.9 1055 M936.7 1059.2 L947.3 1065.3 L957.9 1059.2"/></g><g stroke="#bfe9fa" stroke-width="0.8" fill="none" opacity="0.8"><path d="M940.2 1048.8 L950.8 1055 M943.8 1046.7 L954.4 1052.9 M954.4 1048.8 L943.8 1055 M950.8 1046.7 L940.2 1052.9"/></g><path d="M952 1040.22 L955.6 1042.31 L952 1044.40 L948.4 1042.31 Z" fill="#4fc0ee"/><path d="M948.4 1042.31 L952 1044.40 L952 1048.58 L948.4 1046.49 Z" fill="#1f93d0"/><path d="M955.6 1042.31 L952 1044.40 L952 1048.58 L955.6 1046.49 Z" fill="#0d68a3"/><path d="M959.6 1047.42 L963.2 1049.51 L959.6 1051.60 L956.0 1049.51 Z" fill="#4fc0ee"/><path d="M956.0 1049.51 L959.6 1051.60 L959.6 1055.78 L956.0 1053.69 Z" fill="#1f93d0"/><path d="M963.2 1049.51 L959.6 1051.60 L959.6 1055.78 L963.2 1053.69 Z" fill="#0d68a3"/></svg>
<div class="a" style="left:737px;top:1077px;width:51px;height:3px;background:#c33cb6"></div>
<div class="a" style="left:799px;top:1077px;width:42px;height:3px;background:#c33cb6"></div>
<div class="a" style="left:861px;top:1077px;width:51px;height:3px;background:#c33cb6"></div>
<div class="a" style="left:918px;top:1077px;width:61px;height:3px;background:#c33cb6"></div>
<div class="a" style="left:841px;top:1077px;width:8px;height:3px;background:#dc8ad3"></div>
<svg style="left:1581px;top:1049px" width="18" height="11" viewBox="1581 1049 18 11"><path d="M1582.3 1058.6 L1590 1051 L1597.7 1058.6" fill="none" stroke="#111" stroke-width="1.3"/></svg>
<svg style="left:1609px;top:1047px" width="23" height="15" viewBox="1609 1047 23 15"><rect x="1613.9" y="1050.4" width="14.6" height="9.5" fill="none" stroke="#111" stroke-width="1.1"/><rect x="1615.6" y="1052.1" width="11.2" height="6.1" fill="#111"/><rect x="1629" y="1053.4" width="1.3" height="4.3" fill="#111"/><path d="M1611.3 1047.9 V1050.6 M1613.6 1047.9 V1050.6" stroke="#111" stroke-width="1"/><path d="M1610.3 1050.6 H1614.6 V1052.6 Q1614.6 1054.6 1612.45 1054.6 Q1610.3 1054.6 1610.3 1052.6 Z" fill="#111"/><path d="M1612.45 1054 V1060 H1614" fill="none" stroke="#111" stroke-width="1.1"/></svg>
<svg style="left:1642px;top:1046px" width="19" height="19" viewBox="1642 1046 19 19"><circle cx="1656.4" cy="1061.6" r="1.55" fill="#111"/><path d="M1651.2 1062.6 A5.3 5.3 0 0 1 1657.6 1056.4" fill="none" stroke="#111" stroke-width="1.25"/><path d="M1647.3 1062.6 A9.2 9.2 0 0 1 1657.8 1052.5" fill="none" stroke="#111" stroke-width="1.25"/><path d="M1643.5 1062.6 A13 13 0 0 1 1658 1048.7" fill="none" stroke="#111" stroke-width="1.25"/></svg>
<svg style="left:1669px;top:1045px" width="23" height="20" viewBox="1669 1045 23 20"><path d="M1670.6 1051.4 H1673 L1676.4 1048.4 V1061.2 L1673 1058.2 H1670.6 Z" fill="none" stroke="#111" stroke-width="1.15" stroke-linejoin="miter"/><path d="M1680 1052.2 Q1682 1054.8 1680 1057.4 M1683.2 1049.3 Q1687.2 1054.8 1683.2 1060.3 M1686.6 1046.3 Q1692.6 1054.8 1686.6 1063.3" fill="none" stroke="#111" stroke-width="1.15"/></svg>
<svg style="left:1700.4px;top:1046.3px" width="18.4" height="15.6" viewBox="0 0 20 17"><path d="M5 0 L10 3.2 L5 6.4 L0 3.2 Z M15 0 L20 3.2 L15 6.4 L10 3.2 Z M5 6.4 L10 9.6 L5 12.8 L0 9.6 Z M15 6.4 L20 9.6 L15 12.8 L10 9.6 Z M10 10.6 L15 13.8 L10 17 L5 13.8 Z" fill="#111"/></svg>
<span class="t" style="left:1732.99px;top:1045.95px;font-size:15px;line-height:20px;color:#111;transform:scaleX(0.9065);transform-origin:0 0;">ENG</span>
<span class="t" style="left:1786.20px;top:1034.05px;font-size:15px;line-height:20px;color:#111;letter-spacing:-0.533px;">4:31 PM</span>
<span class="t" style="left:1778.80px;top:1057.25px;font-size:15px;line-height:20px;color:#111;letter-spacing:0.025px;">1/29/2024</span>
<svg style="left:1868px;top:1044px" width="23" height="22" viewBox="1868 1044 23 22"><path d="M1869.8 1045.8 H1888.4 V1061.4 H1881.4 L1878.9 1063.9 L1876.4 1061.4 H1869.8 Z" fill="none" stroke="#111" stroke-width="1.3" stroke-linejoin="miter"/></svg>
<div class="a" style="left:1914px;top:1030px;width:1px;height:50px;background:#a8a8a8"></div>
</div>
</body></html>
